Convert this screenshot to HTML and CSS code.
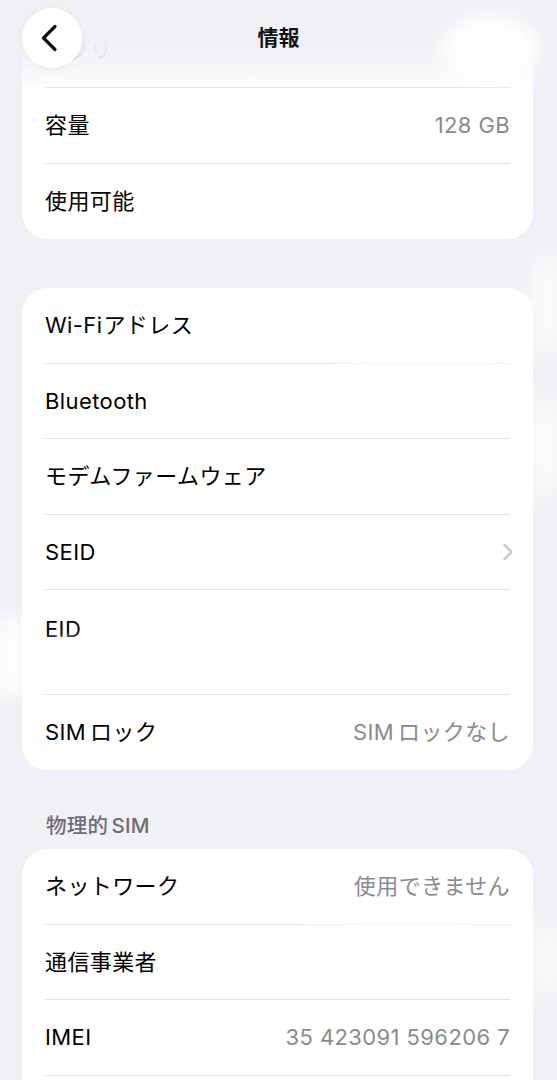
FILE: index.html
```html
<!DOCTYPE html>
<html lang="ja">
<head>
<meta charset="utf-8">
<title>情報</title>
<link rel="stylesheet" href="styles.css">
</head>
<body>
<div class="screen">
  <header class="nav">
    <button class="back" aria-label="戻る">
      <svg width="20" height="28" viewBox="0 0 20 28"><path d="M15 2.5 L3.5 14 L15 25.5" fill="none" stroke="#111" stroke-width="3.2" stroke-linecap="round" stroke-linejoin="round"/></svg>
    </button>
    <h1 class="title">情報</h1>
  </header>

  <main class="content">
    <section class="card card-first">
      <div class="row"><span class="label ghost">アプリ</span></div>
      <div class="row"><span class="label">容量</span><span class="value">128 GB</span></div>
      <div class="row"><span class="label">使用可能</span><span class="value faint">&nbsp;</span></div>
    </section>

    <section class="card card-gap">
      <div class="row"><span class="label"><span class="lat-s">Wi-Fi</span>アドレス</span></div>
      <div class="row"><span class="label">Bluetooth</span></div>
      <div class="row"><span class="label">モデムファームウェア</span></div>
      <div class="row"><span class="label">SEID</span>
        <svg class="chev" width="12" height="20" viewBox="0 0 12 20"><path d="M2.5 3 L9.5 10 L2.5 17" fill="none" stroke="#c4c4c8" stroke-width="2.2" stroke-linecap="round" stroke-linejoin="round"/></svg>
      </div>
      <div class="row row-tall"><span class="label">EID</span><span class="sub">&nbsp;</span></div>
      <div class="row"><span class="label"><span class="lat">SIM</span>ロック</span><span class="value"><span class="lat">SIM</span>ロックなし</span></div>
    </section>

    <h2 class="section-title">物理的<span class="lat-l">SIM</span></h2>
    <section class="card">
      <div class="row"><span class="label">ネットワーク</span><span class="value">使用できません</span></div>
      <div class="row"><span class="label">通信事業者</span></div>
      <div class="row"><span class="label">IMEI</span><span class="value">35 423091 596206 7</span></div>
      <div class="row"><span class="label">&nbsp;</span></div>
    </section>
  </main>

  <div class="redact">
    <span class="blob b1"></span>
    <span class="blob b2"></span>
    <span class="blob b3"></span>
    <span class="blob b4"></span>
    <span class="blob b5"></span>
    <span class="blob b6"></span>
    <span class="blob b7"></span>
    <span class="blob b8"></span>
  </div>
</div>
</body>
</html>
```
FILE: styles.css
```css
* { box-sizing: border-box; }

html, body {
  margin: 0;
  padding: 0;
  background: #f0f0f5;
}

body {
  font-family: Inter, "Noto Sans CJK JP", sans-serif;
  color: #000;
  overflow: hidden;
}

.screen {
  position: relative;
  width: 557px;
  height: 1080px;
  overflow: hidden;
}

.nav {
  position: absolute;
  left: 0;
  top: 0;
  width: 100%;
  height: 92px;
  z-index: 5;
  background: linear-gradient(to bottom,
    rgba(240,240,245,1) 0%,
    rgba(240,240,245,0.93) 45%,
    rgba(240,240,245,0.6) 72%,
    rgba(240,240,245,0) 100%);
}

.back {
  position: absolute;
  left: 22px;
  top: 8px;
  width: 60px;
  height: 60px;
  border-radius: 50%;
  border: none;
  padding: 0 4px 0 0;
  background: rgba(255,255,255,0.96);
  box-shadow: 0 1px 6px rgba(0,0,0,0.06);
  display: flex;
  align-items: center;
  justify-content: center;
}

.title {
  margin: 0;
  position: absolute;
  left: 0;
  right: 0;
  top: 23px;
  text-align: center;
  font-size: 21px;
  line-height: 30px;
  font-weight: 700;
  color: #111;
}

.content {
  padding-top: 12.5px;
  display: flex;
  flex-direction: column;
}

.card {
  margin: 0 24px 0 22px;
  background: #fff;
  border-radius: 26px;
  overflow: hidden;
}

.card-gap { margin-top: 49px; }

.row {
  height: 75.5px;
  margin: 0 23px 0 23px;
  display: flex;
  align-items: center;
  justify-content: space-between;
  border-bottom: 1px solid #e3e3e7;
  font-size: 22px;
  line-height: 30px;
  letter-spacing: 0.4px;
}

.row:last-child { border-bottom: none; }

.row-tall {
  height: 104.5px;
  flex-direction: column;
  align-items: flex-start;
  justify-content: flex-start;
  padding-top: 24px;
}

.label {
  color: #000;
  white-space: nowrap;
}

.lat { margin-right: 4px; }
.lat-s { margin-right: 1px; }
.lat-l { margin-left: 3px; }

.ghost { color: #bdbdc2; }

.value {
  color: #8a8a8e;
  white-space: nowrap;
}

.faint { color: #e6e6ea; }

.sub { color: #fff; }

.chev { margin-right: -4px; }

.section-title {
  margin: 0;
  padding: 41px 0 8px 46px;
  font-size: 20.5px;
  line-height: 30px;
  font-weight: 500;
  color: #6e6e73;
  letter-spacing: 0.3px;
}

.redact {
  position: absolute;
  inset: 0;
  pointer-events: none;
  z-index: 6;
}

.blob {
  position: absolute;
  background: #fff;
  border-radius: 50%;
  filter: blur(10px);
}

.b1 { left: 440px; top: 14px; width: 100px; height: 70px; opacity: 0.95; }
.b2 { left: 530px; top: 250px; width: 34px; height: 110px; opacity: 0.8; }
.b3 { left: 528px; top: 390px; width: 34px; height: 110px; opacity: 0.8; }
.b4 { left: -10px; top: 612px; width: 40px; height: 90px; opacity: 0.9; }
.b5 { left: 530px; top: 920px; width: 34px; height: 80px; opacity: 0.7; }
.b6 { left: 330px; top: 355px; width: 190px; height: 16px; opacity: 0.9; filter: blur(6px); }
.b7 { left: 300px; top: 916px; width: 220px; height: 14px; opacity: 0.9; filter: blur(6px); }
.b8 { left: 40px; top: 638px; width: 80px; height: 12px; opacity: 0.85; filter: blur(4px); }
```
